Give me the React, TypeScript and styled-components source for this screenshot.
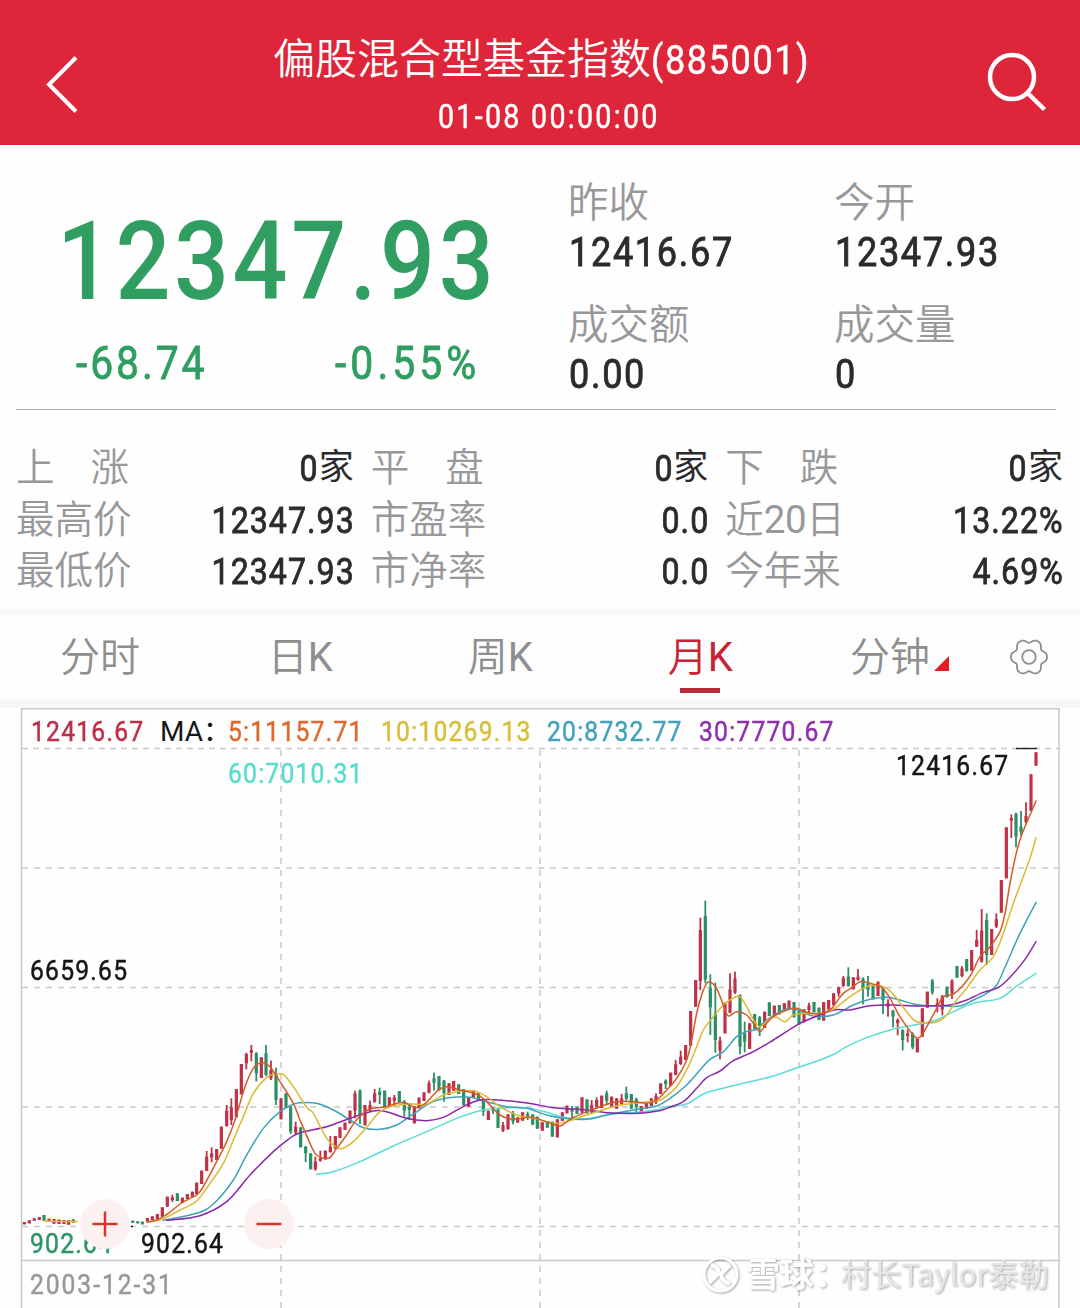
import React from "react";
import styled, { createGlobalStyle } from "styled-components";

const GlobalStyle = createGlobalStyle`
  * { box-sizing: border-box; }
  body { margin: 0; background: #fefefe; }
`;

const Screen = styled.div`
  width: 1080px;
  height: 1308px;
  overflow: hidden;
  display: flex;
  flex-direction: column;
  background: #fefefe;
  color: #2b2b2d;
  font-family: Roboto, "Noto Sans CJK SC", sans-serif;
  white-space: nowrap;
`;

// Condensed figures: narrow digits with open spacing.
const Figures = styled.span<{ $ls: number; $from?: "left" | "right"; $bold?: number }>`
  display: inline-block;
  transform: scaleX(0.88);
  transform-origin: ${(p) => p.$from ?? "left"} center;
  letter-spacing: ${(p) => p.$ls}px;
  -webkit-text-stroke: ${(p) => p.$bold ?? 0.5}px currentColor;
`;

const Latin = styled.span`
  font-weight: 400;
  letter-spacing: -0.4px;
`;

const Header = styled.header`
  flex: none;
  height: 145px;
  padding: 0 32px 0 44px;
  display: grid;
  grid-template-columns: 66px 1fr 66px;
  background: #de263a;
  color: #fff;
`;

const HeaderIcon = styled.div`
  display: flex;
  align-items: flex-start;
  padding-top: 50px;
`;

const Titles = styled.div`
  display: flex;
  flex-direction: column;
  padding: 33px 0 0 163px;
`;

const Title = styled.h1`
  margin: 0;
  font-size: 42px;
  line-height: 53px;
  font-weight: 350;
`;

const Code = styled(Figures)`
  font-size: 41px;
  font-weight: 400;
`;

const Timestamp = styled.div`
  padding-left: 165px;
  font-size: 32.5px;
  line-height: 60px;
`;

const Quote = styled.section`
  flex: none;
  height: 265px;
  margin: 0 24px 0 16px;
  display: grid;
  grid-template-columns: 552px 266px 1fr;
  border-bottom: 1px solid #b4b4b6;
`;

const PriceBlock = styled.div`
  color: #2f9e60;
  padding: 61px 0 0 41px;
`;

const Price = styled.div`
  font-size: 110px;
  line-height: 112px;
  font-weight: 500;
`;

const Changes = styled.div`
  display: grid;
  grid-template-columns: 259px 1fr;
  padding: 18px 0 0 19px;
  font-size: 46.5px;
  line-height: 54px;
`;

const Facts = styled.div`
  padding-top: 34px;
  display: flex;
  flex-direction: column;
  gap: 25px;
`;

const FactLabel = styled.div`
  margin-bottom: 2px;
  font-size: 40.5px;
  line-height: 48px;
  font-weight: 350;
  color: #98989a;
`;

const FactValue = styled.div`
  padding-left: 1px;
  font-size: 41px;
  line-height: 47px;
`;

const Stats = styled.section`
  flex: none;
  height: 199px;
  padding: 33px 17px 0 16px;
  display: grid;
  grid-template-columns: repeat(3, 1fr);
  grid-auto-rows: 51.5px;
  column-gap: 17px;
`;

const Stat = styled.div`
  display: flex;
  justify-content: space-between;
  line-height: 51px;
`;

const StatLabel = styled.span<{ $spread?: boolean }>`
  width: ${(p) => (p.$spread ? "113px" : "auto")};
  font-size: 38.5px;
  line-height: 49.5px;
  font-weight: 350;
  color: #98989a;
  text-align-last: ${(p) => (p.$spread ? "justify" : "auto")};
`;

const StatValue = styled.span<{ $unit: boolean }>`
  width: 151px;
  margin-right: ${(p) => (p.$unit ? 0 : -1)}px;
  display: flex;
  justify-content: flex-end;
  font-size: 36.5px;
`;

const Unit = styled.span`
  font-size: 35px;
  font-weight: 400;
  line-height: 50px;
`;

const Divider = styled.div<{ $h: number }>`
  flex: none;
  height: ${(p) => p.$h}px;
  background: #f7f7f8;
`;

const Tabs = styled.nav`
  flex: none;
  height: 86px;
  display: grid;
  grid-template-columns: repeat(4, 200px) 199px 1fr;
  background: #fdfdfd;
`;

const Tab = styled.div<{ $active?: boolean }>`
  display: flex;
  flex-direction: column;
  align-items: center;
  padding-top: 14px;
  font-size: 40px;
  line-height: 60px;
  font-weight: 350;
  color: ${(p) => (p.$active ? "#c92136" : "#8e8e90")};
  &::after {
    content: "";
    width: 40px;
    height: 5px;
    background: ${(p) => (p.$active ? "#b92c3c" : "transparent")};
  }
`;

const TabText = styled.span`
  display: flex;
  align-items: baseline;
  gap: 4px;
`;

const GearCell = styled.div`
  display: flex;
  padding: 23px 0 0 10px;
`;

const Chart = styled.section`
  position: relative;
  flex: 1;
`;

const Plot = styled.svg`
  position: absolute;
  inset: 0;
  display: block;
`;

const Legend = styled.div`
  position: relative;
  display: grid;
  grid-template-columns: 129px 68px 153px 166px 152px 1fr;
  padding: 3px 0 0 31px;
  font-size: 28px;
  line-height: 41.5px;
`;

const LegendItem = styled.span<{ $c: string; $col?: number }>`
  color: ${(p) => p.$c};
  grid-column: ${(p) => p.$col ?? "auto"};
`;

const PlotLabel = styled.span<{ $x: number; $y: number; $c?: string }>`
  position: absolute;
  left: ${(p) => p.$x}px;
  top: ${(p) => p.$y}px;
  color: ${(p) => p.$c ?? "#161616"};
  font-size: 28px;
  line-height: 32px;
`;

const ZoomButton = styled.div<{ $x: number }>`
  position: absolute;
  left: ${(p) => p.$x}px;
  top: 491px;
  width: 50px;
  height: 50px;
  border-radius: 50%;
  background: #fdf0f1;
  display: grid;
  place-items: center;
`;

const Watermark = styled.div`
  position: absolute;
  left: 701px;
  top: 544px;
  display: flex;
  align-items: center;
  height: 44px;
  color: #fff;
  filter: drop-shadow(1px 1px 0.8px rgba(0, 0, 0, 0.34));
`;

const Brand = styled.span`
  margin: -3px 0 0 6px;
  width: 95px;
  font-size: 34px;
  font-weight: 700;
`;

const Author = styled.span`
  margin-top: -3px;
  font-family: "Noto Sans CJK SC", sans-serif;
  font-size: 30.2px;
  color: #e6e6e6;
`;

const RED = "#bf3147";
const GREEN = "#2c8f63";

type Bar = [number, string, number, number, number?, number?];
type Pt = [number, number];

// Candles: x, direction, high, low, and body top and bottom where there is a wick.
// Each segment is recorded at three units to the pixel from its own origin.
const segments: { o: Pt; bars: Bar[] }[] = [
  {
    o: [0, 1020],
    bars: [
      [73, "r", 606, 613], [88, "r", 601, 610], [103, "r", 595, 602], [118, "r", 591, 600], [132, "g", 585, 602],
      [147, "r", 596, 606], [162, "r", 597, 611], [177, "r", 599, 612], [192, "r", 600, 612], [206, "r", 600, 614],
      [220, "g", 598, 608], [398, "g", 602, 608], [413, "g", 604, 610], [427, "g", 605, 613], [442, "r", 594, 603],
      [457, "r", 589, 600], [472, "r", 582, 598], [487, "r", 562, 590], [502, "r", 530, 560], [517, "r", 524, 546, 532, 540],
      [532, "g", 520, 543], [547, "r", 533, 548], [562, "r", 522, 537], [577, "r", 515, 530], [590, "r", 488, 523],
      [605, "r", 452, 492], [620, "r", 393, 453, 410, 453], [635, "r", 382, 427, 400, 412], [650, "r", 387, 420],
      [664, "r", 320, 386], [680, "r", 255, 320, 272, 318], [694, "r", 235, 315, 262, 300], [709, "r", 207, 292],
      [724, "r", 132, 223], [739, "r", 98, 148, 102, 130], [754, "r", 75, 124, 90, 98], [769, "g", 96, 184, 100, 160],
      [784, "r", 112, 174], [798, "g", 75, 168, 100, 165], [813, "r", 122, 180, 150, 175], [828, "g", 143, 255, 160, 240],
      [843, "r", 235, 298], [858, "g", 220, 264], [872, "g", 256, 342, 262, 335], [887, "r", 305, 343, 320, 338],
      [902, "g", 322, 382], [917, "g", 378, 426, 380, 400], [932, "g", 400, 448], [946, "r", 410, 452, 425, 448],
      [961, "r", 392, 425, 415, 422], [976, "r", 392, 418], [991, "r", 348, 398, 380, 396], [1006, "r", 348, 386],
      [1020, "r", 322, 354], [1035, "r", 308, 330], [1050, "r", 272, 310],
    ],
  },
  {
    o: [300, 1040],
    bars: [
      [165, "r", 152, 235, 160, 212], [180, "g", 148, 252, 152, 225], [195, "r", 195, 256], [210, "r", 182, 215, 195, 212],
      [224, "r", 147, 187, 160, 187], [239, "g", 143, 192, 155, 165], [254, "g", 152, 202], [268, "r", 172, 199],
      [283, "r", 165, 198, 172, 182], [298, "g", 153, 187], [313, "g", 180, 230, 185, 212], [328, "g", 195, 240, 200, 210],
      [343, "r", 198, 250], [357, "r", 173, 205], [372, "r", 157, 183], [387, "r", 122, 160, 130, 158],
      [402, "g", 98, 152, 115, 128], [417, "g", 108, 152], [432, "g", 120, 185, 122, 160], [447, "r", 130, 165],
      [461, "r", 123, 152], [476, "g", 133, 162], [491, "g", 148, 196], [506, "r", 172, 200], [520, "r", 150, 174],
      [535, "g", 160, 182], [550, "g", 175, 228, 180, 215], [565, "r", 212, 240], [579, "g", 200, 222, 206, 212],
      [594, "g", 208, 264], [609, "r", 246, 276, 255, 272], [624, "r", 223, 268], [639, "g", 213, 253, 220, 245],
      [653, "r", 232, 248], [668, "r", 217, 242], [683, "g", 215, 240, 222, 230], [698, "g", 223, 254],
      [712, "g", 230, 266], [727, "r", 247, 272], [742, "g", 243, 263], [757, "g", 245, 290], [772, "r", 238, 292],
      [787, "r", 217, 243], [801, "r", 197, 220], [816, "g", 198, 234, 205, 215], [831, "g", 200, 222],
      [846, "r", 172, 218], [861, "g", 178, 220], [875, "r", 180, 220, 195, 218], [890, "r", 172, 206, 180, 200],
      [905, "r", 167, 204], [920, "g", 152, 196, 160, 182], [935, "r", 170, 202], [950, "r", 175, 206],
      [965, "r", 162, 196, 175, 192], [979, "g", 140, 182, 160, 176], [994, "g", 162, 206], [1009, "g", 173, 217, 178, 200],
      [1024, "r", 198, 217], [1039, "r", 188, 205], [1054, "r", 175, 198], [1068, "r", 160, 192, 168, 188],
    ],
  },
  {
    o: [600, 880],
    bars: [
      [182, "r", 610, 642], [197, "g", 598, 627, 602, 612], [212, "r", 578, 618], [227, "r", 540, 586, 553, 584],
      [242, "r", 512, 555, 530, 552], [257, "r", 495, 540], [272, "r", 393, 497], [287, "r", 300, 380],
      [301, "r", 113, 330, 150, 303], [316, "g", 62, 310, 108, 298], [331, "g", 283, 465, 325, 382],
      [346, "g", 308, 518, 400, 480], [360, "r", 470, 538, 482, 512], [375, "r", 368, 460], [390, "r", 280, 400, 328, 398],
      [405, "r", 275, 342, 295, 338], [420, "g", 343, 523, 345, 500], [434, "g", 425, 517, 460, 485], [449, "r", 430, 507],
      [464, "g", 402, 448], [479, "g", 408, 468, 412, 440], [494, "r", 395, 444], [508, "g", 367, 408],
      [523, "r", 377, 405], [538, "g", 375, 403], [553, "r", 370, 390], [567, "r", 362, 384], [582, "g", 366, 412],
      [597, "g", 392, 434], [612, "r", 388, 427], [627, "r", 368, 398, 376, 390], [642, "g", 366, 397],
      [657, "g", 383, 420], [671, "r", 366, 422], [686, "r", 360, 388], [701, "r", 340, 376], [716, "r", 320, 350, 322, 340],
    ],
  },
  {
    o: [800, 740],
    bars: [
      [130, "r", 708, 740, 714, 738], [145, "g", 682, 740, 710, 738], [160, "r", 712, 748], [174, "r", 687, 722, 710, 720],
      [189, "g", 712, 793, 716, 748], [204, "g", 708, 770, 730, 750], [219, "g", 738, 778], [234, "r", 725, 768],
      [249, "g", 742, 822, 745, 780], [264, "r", 778, 830, 790, 800], [279, "g", 810, 862, 812, 830],
      [293, "r", 835, 886, 840, 850], [308, "g", 868, 931, 870, 900], [323, "r", 868, 907, 880, 888],
      [338, "g", 877, 928, 882, 922], [352, "r", 896, 937], [367, "r", 805, 890], [382, "r", 755, 803],
      [397, "g", 717, 764, 722, 758], [412, "r", 775, 817, 790, 800], [427, "r", 765, 826, 768, 808], [441, "g", 740, 772],
      [456, "r", 718, 777, 722, 760], [471, "g", 678, 713], [486, "r", 678, 712, 685, 708], [500, "g", 657, 694],
      [515, "r", 630, 692], [530, "r", 570, 621, 600, 620], [545, "r", 507, 668, 572, 665], [560, "g", 520, 675, 540, 645],
      [575, "r", 567, 645], [589, "r", 520, 564, 538, 560], [604, "r", 420, 518], [619, "r", 262, 415],
      [634, "r", 223, 294, 234, 242], [648, "g", 218, 322, 222, 290], [663, "g", 213, 287, 260, 275],
      [678, "r", 187, 250, 228, 246], [693, "r", 103, 213], [708, "r", 37, 77],
    ],
  },
];

// Moving averages, in the same four segments.
const averages: { color: string; parts: Pt[][] }[] = [
  {
    color: "#5cdcd6",
    parts: [
      [],
      [[50, 403], [100, 395], [180, 365], [280, 318], [380, 275], [470, 235], [540, 212], [610, 204], [680, 203], [740, 217], [790, 232], [860, 236], [940, 222], [1020, 216], [1079, 208]],
      [[200, 680], [260, 672], [310, 642], [380, 622], [450, 605], [520, 588], [600, 560], [660, 540], [710, 519]],
      [[130, 925], [200, 893], [290, 865], [370, 850], [410, 840], [450, 820], [520, 790], [600, 775], [650, 738], [708, 700]],
    ],
  },
  {
    color: "#3fa3b8",
    parts: [
      [[490, 601], [590, 580], [640, 552], [700, 480], [740, 405], [790, 325], [840, 275], [880, 253]],
      [[0, 188], [50, 190], [100, 210], [150, 240], [190, 263], [240, 268], [290, 255], [340, 222], [400, 185], [460, 172], [510, 172], [560, 185], [620, 200], [680, 205], [740, 225], [790, 235], [860, 238], [920, 225], [1000, 210], [1070, 198]],
      [[210, 655], [260, 615], [300, 570], [330, 538], [370, 515], [410, 470], [440, 455], [470, 448], [500, 420], [540, 395], [570, 385], [600, 393], [640, 408], [700, 405]],
      [[160, 795], [210, 778], [260, 772], [300, 780], [340, 792], [380, 797], [430, 798], [480, 798], [520, 780], [560, 760], [590, 735], [620, 670], [660, 580], [708, 487]],
    ],
  },
  {
    color: "#8b27a8",
    parts: [
      [[500, 601], [600, 587], [680, 545], [750, 465], [820, 395], [865, 358]],
      [[0, 278], [80, 260], [150, 235], [220, 213], [260, 215], [320, 235], [380, 242], [430, 232], [480, 205], [540, 180], [620, 182], [700, 192], [760, 203], [860, 210], [920, 218], [1020, 220], [1079, 212]],
      [[200, 685], [250, 665], [290, 625], [320, 593], [360, 573], [400, 542], [460, 515], [520, 480], [600, 430], [660, 405], [705, 389]],
      [[150, 810], [210, 797], [280, 795], [340, 798], [400, 797], [450, 795], [500, 780], [550, 757], [590, 745], [620, 722], [670, 665], [708, 605]],
    ],
  },
  {
    color: "#dcb92f",
    parts: [
      [[440, 606], [485, 598], [540, 570], [590, 543], [630, 490], [670, 430], [700, 360], [730, 290], [760, 220], [800, 172], [825, 163], [850, 163], [880, 200], [920, 262]],
      [[40, 220], [80, 295], [105, 318], [125, 326], [160, 305], [200, 262], [240, 215], [280, 198], [330, 192], [380, 192], [430, 165], [470, 155], [520, 152], [560, 170], [600, 200], [650, 225], [700, 235], [760, 250], [800, 245], [850, 228], [900, 212], [960, 195], [1020, 188], [1070, 183]],
      [[190, 655], [230, 620], [265, 560], [290, 500], [310, 450], [340, 410], [370, 375], [390, 360], [405, 352], [420, 350], [440, 380], [460, 418], [480, 440], [510, 415], [530, 412], [555, 425], [580, 405], [620, 400], [660, 400], [700, 388]],
      [[150, 770], [190, 745], [220, 735], [260, 745], [290, 775], [320, 815], [350, 845], [410, 846], [440, 825], [470, 780], [500, 745], [540, 690], [580, 650], [610, 580], [640, 490], [670, 410], [690, 355], [708, 293]],
    ],
  },
  {
    color: "#d65a28",
    parts: [
      [[440, 606], [470, 600], [505, 580], [540, 552], [570, 535], [600, 515], [650, 425], [680, 365], [705, 300], [735, 200], [760, 145], [785, 128], [810, 140], [840, 185], [880, 250]],
      [[0, 240], [30, 310], [50, 345], [85, 355], [110, 325], [140, 285], [165, 245], [190, 220], [215, 205], [250, 202], [290, 190], [315, 188], [345, 202], [370, 195], [400, 165], [415, 150], [440, 140], [480, 150], [530, 162], [560, 185], [600, 225], [640, 238], [690, 232], [740, 245], [780, 258], [810, 238], [860, 215], [900, 200], [950, 185], [1000, 185], [1040, 190], [1070, 180]],
      [[200, 630], [230, 595], [260, 540], [275, 480], [290, 400], [305, 345], [320, 310], [333, 307], [350, 325], [370, 375], [385, 408], [410, 395], [440, 405], [460, 430], [480, 455], [500, 430], [520, 410], [560, 390], [590, 385], [615, 395], [650, 402], [690, 390]],
      [[110, 785], [130, 760], [160, 740], [180, 725], [210, 730], [245, 742], [270, 775], [300, 830], [340, 885], [358, 893], [375, 870], [410, 805], [430, 770], [460, 762], [490, 735], [515, 700], [540, 650], [570, 620], [600, 575], [615, 520], [630, 430], [650, 335], [665, 285], [690, 225], [708, 183]],
    ],
  },
];

const place = (o: Pt, x: number, y: number): Pt => [o[0] + x / 3, o[1] + y / 3];

// Catmull-Rom spline through the points, as cubic Béziers.
function curve(p: Pt[]) {
  let d = `M${p[0][0]} ${p[0][1]}`;
  for (let i = 0; i < p.length - 1; i++) {
    const a = p[i - 1] ?? p[i];
    const b = p[i];
    const c = p[i + 1];
    const e = p[i + 2] ?? c;
    d += `C${b[0] + (c[0] - a[0]) / 6} ${b[1] + (c[1] - a[1]) / 6} ${c[0] - (e[0] - b[0]) / 6} ${c[1] - (e[1] - b[1]) / 6} ${c[0]} ${c[1]}`;
  }
  return d;
}

function gearPath(cx: number, cy: number) {
  const pts: string[] = [];
  for (let i = 0; i <= 120; i++) {
    const t = (i / 120) * Math.PI * 2;
    const r = 16.4 + 1.9 * Math.cos(6 * t) - 0.3 * Math.cos(12 * t);
    pts.push(`${(cx + r * Math.cos(t)).toFixed(2)} ${(cy + r * Math.sin(t)).toFixed(2)}`);
  }
  return "M" + pts.join("L") + "Z";
}

function KLinePlot() {
  return (
    <Plot width="1080" height="600" viewBox="0 708 1080 600" fill="none">
      <g stroke="#c9c9cc" strokeWidth="1.5">
        <path d="M21.5 1308V708.8H1059V1308M21.5 1260.5H1059" />
        <path d="M22 748.5H1059" strokeDasharray="6 5" />
        <path d="M22 868H1059M22 987.5H1059M22 1107H1059M22 1226.5H1059" strokeDasharray="6 6" />
        <path d="M281 750V1308M540 750V1308M799 750V1308" strokeDasharray="6 6" />
      </g>
      {segments.map((s, k) =>
        s.bars.map(([bx, dir, hi, lo, top, bottom]) => {
          const [x, y1] = place(s.o, bx, hi);
          const y2 = place(s.o, bx, lo)[1];
          const b1 = place(s.o, bx, top ?? hi)[1];
          const b2 = place(s.o, bx, bottom ?? lo)[1];
          const c = dir === "r" ? RED : GREEN;
          return (
            <g key={`${k}-${bx}`} fill={c}>
              <rect x={x - 0.9} y={y1} width="1.8" height={y2 - y1} />
              <rect x={x - 1.6} y={b1} width="3.2" height={b2 - b1} />
            </g>
          );
        })
      )}
      <path d="M44 1221L60 1221.5L78 1221.5" stroke="#dcb92f" strokeWidth="1.6" />
      {averages.map((m) => (
        <path
          key={m.color}
          d={curve(m.parts.flatMap((pts, k) => pts.map(([x, y]) => place(segments[k].o, x, y))))}
          stroke={m.color}
          strokeWidth="1.5"
          strokeLinecap="round"
        />
      ))}
      <path d="M1016 748.5H1037" stroke="#222" strokeWidth="1.4" />
      <path d="M131 1226.5H133" stroke="#222" strokeWidth="1.4" />
    </Plot>
  );
}

const facts = [
  [["昨收", "12416.67"], ["成交额", "0.00"]],
  [["今开", "12347.93"], ["成交量", "0"]],
];

const stats: [React.ReactNode, string, string?][] = [
  ["上 涨", "0", "家"], ["平 盘", "0", "家"], ["下 跌", "0", "家"],
  ["最高价", "12347.93"], ["市盈率", "0.0"], [<>近<Latin>20</Latin>日</>, "13.22%"],
  ["最低价", "12347.93"], ["市净率", "0.0"], ["今年来", "4.69%"],
];

export default function App() {
  return (
    <Screen>
      <GlobalStyle />
      <Header>
        <HeaderIcon>
          <svg width="36" height="70" fill="none" stroke="#fff" strokeWidth="4">
            <path d="M32 7.500L5 34.500L32 61.500" />
          </svg>
        </HeaderIcon>
        <Titles>
          <Title>偏股混合型基金指数<Code $ls={1.8}>(885001)</Code></Title>
          <Timestamp><Figures $ls={2.6}>01-08 00:00:00</Figures></Timestamp>
        </Titles>
        <HeaderIcon>
          <svg width="66" height="66" fill="none" stroke="#fff" strokeWidth="4.500">
            <circle cx="30" cy="27" r="22" />
            <path d="M45.500 43L62.500 59.500" />
          </svg>
        </HeaderIcon>
      </Header>

      <Quote>
        <PriceBlock>
          <Price><Figures $ls={4} $bold={0}>12347.93</Figures></Price>
          <Changes>
            <Figures $ls={3.3} $bold={0.8}>-68.74</Figures>
            <Figures $ls={4.6} $bold={0.8}>-0.55%</Figures>
          </Changes>
        </PriceBlock>
        {facts.map((column) => (
          <Facts key={column[0][0]}>
            {column.map(([label, value]) => (
              <div key={label}>
                <FactLabel>{label}</FactLabel>
                <FactValue><Figures $ls={1.9} $bold={0.9}>{value}</Figures></FactValue>
              </div>
            ))}
          </Facts>
        ))}
      </Quote>

      <Stats>
        {stats.map(([label, value, unit], i) => (
          <Stat key={i}>
            <StatLabel $spread={!!unit}>{label}</StatLabel>
            <StatValue $unit={!!unit}>
              <Figures $ls={1.2} $from="right" $bold={0.8}>{value}</Figures>
              {unit && <Unit>{unit}</Unit>}
            </StatValue>
          </Stat>
        ))}
      </Stats>

      <Divider $h={5} />
      <Tabs>
        <Tab>分时</Tab>
        <Tab><span>日<Latin>K</Latin></span></Tab>
        <Tab><span>周<Latin>K</Latin></span></Tab>
        <Tab $active><span>月<Latin>K</Latin></span></Tab>
        <Tab>
          <TabText>
            分钟
            <svg width="15" height="15"><path d="M15 0V15H0Z" fill="#e31d24" /></svg>
          </TabText>
        </Tab>
        <GearCell>
          <svg width="40" height="40" fill="none" stroke="#8e8e90" strokeWidth="1.800">
            <path d={gearPath(20, 20)} />
            <circle cx="20" cy="20" r="6.800" />
          </svg>
        </GearCell>
      </Tabs>
      <Divider $h={8} />

      <Chart>
        <KLinePlot />
        <Legend>
          <LegendItem $c="#bb3048"><Figures $ls={1.4}>12416.67</Figures></LegendItem>
          <LegendItem $c="#161616">MA：</LegendItem>
          <LegendItem $c="#dd6a2c"><Figures $ls={1.4}>5:11157.71</Figures></LegendItem>
          <LegendItem $c="#d8bf38"><Figures $ls={1.4}>10:10269.13</Figures></LegendItem>
          <LegendItem $c="#42a2bc"><Figures $ls={1.4}>20:8732.77</Figures></LegendItem>
          <LegendItem $c="#9030ae"><Figures $ls={1.4}>30:7770.67</Figures></LegendItem>
          <LegendItem $c="#5adccb" $col={3}><Figures $ls={1.4}>60:7010.31</Figures></LegendItem>
        </Legend>
        <PlotLabel $x={896} $y={42}><Figures $ls={1.4}>12416.67</Figures></PlotLabel>
        <PlotLabel $x={30} $y={247}><Figures $ls={1.4}>6659.65</Figures></PlotLabel>
        <PlotLabel $x={30} $y={520} $c="#2f9468"><Figures $ls={1.4}>902.64</Figures></PlotLabel>
        <PlotLabel $x={141} $y={520}><Figures $ls={1.4}>902.64</Figures></PlotLabel>
        <PlotLabel $x={30} $y={561} $c="#98989a"><Figures $ls={2.2}>2003-12-31</Figures></PlotLabel>
        <ZoomButton $x={80}>
          <svg width="26" height="26" stroke="#d8352d" strokeWidth="2.500"><path d="M0.500 13H25.500M13 0.500V25.500" /></svg>
        </ZoomButton>
        <ZoomButton $x={244}>
          <svg width="26" height="26" stroke="#d8352d" strokeWidth="2.500"><path d="M0.500 13H25.500" /></svg>
        </ZoomButton>
        <Watermark>
          <svg width="39" height="39" fill="none" stroke="#fff" strokeWidth="3">
            <circle cx="19.500" cy="19.500" r="16.500" />
            <path d="M10 10C17 12 20 17 15 21L8 28M29 10L22 17C18 21 22 27 29 29" strokeWidth="4" />
          </svg>
          <Brand>雪球：</Brand>
          <Author>村长Taylor泰勒</Author>
        </Watermark>
      </Chart>
    </Screen>
  );
}
